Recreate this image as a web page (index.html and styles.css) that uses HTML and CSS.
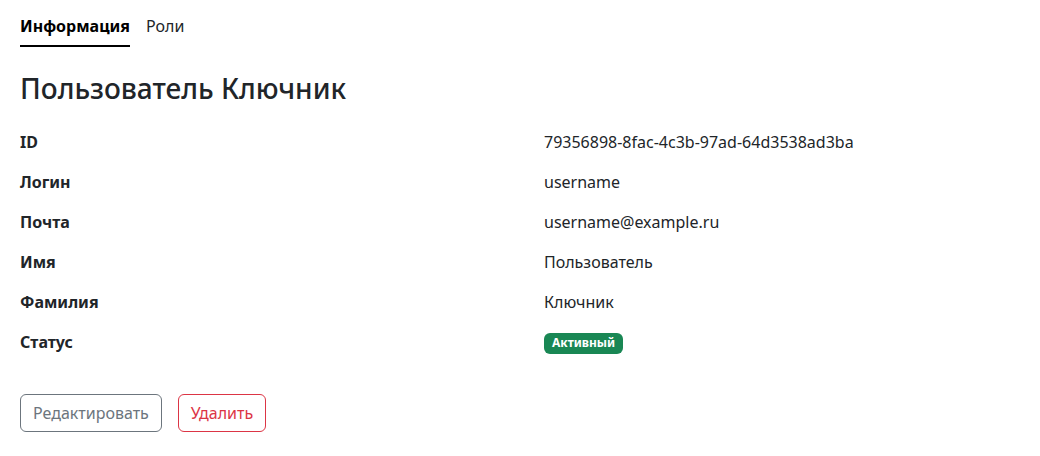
FILE: index.html
```html
<!DOCTYPE html>
<html lang="ru">
<head>
  <meta charset="UTF-8" />
  <meta name="viewport" content="width=device-width, initial-scale=1" />
  <title>Пользователь</title>
  <link rel="stylesheet" href="styles.css">
</head>
<body>
  <nav class="tabs">
    <a class="tab active" href="#">Информация</a>
    <a class="tab" href="#">Роли</a>
  </nav>

  <h1 class="title">Пользователь Ключник</h1>

  <dl class="info">
    <dt>ID</dt>
    <dd>79356898-8fac-4c3b-97ad-64d3538ad3ba</dd>
    <dt>Логин</dt>
    <dd>username</dd>
    <dt>Почта</dt>
    <dd>username@example.ru</dd>
    <dt>Имя</dt>
    <dd>Пользователь</dd>
    <dt>Фамилия</dt>
    <dd>Ключник</dd>
    <dt>Статус</dt>
    <dd><span class="badge">Активный</span></dd>
  </dl>

  <div class="actions">
    <button class="btn btn-secondary">Редактировать</button>
    <button class="btn btn-danger">Удалить</button>
  </div>
</body>
</html>
```

FILE: styles.css
```css
body {
  font-family: 'Noto Sans', 'Open Sans', sans-serif;
  font-size: 16px;
  line-height: 24px;
  color: #212529;
  background: #fff;
  margin: 0;
  padding: 0 20px;
}

.tabs {
  display: flex;
  gap: 16px;
  padding-top: 14px;
}

.tab {
  color: #212529;
  text-decoration: none;
  padding-bottom: 7px;
  border-bottom: 2px solid transparent;
}

.tab.active {
  font-weight: bold;
  color: #000;
  border-bottom-color: #000;
}

.title {
  font-size: 28px;
  font-weight: 500;
  line-height: 36px;
  margin: 23px 0 16px;
}

.info {
  display: grid;
  grid-template-columns: 524px 1fr;
  margin: 0;
}

.info dt,
.info dd {
  margin: 0;
  padding: 8px 0;
}

.info dt {
  font-weight: bold;
}

.badge {
  display: inline-block;
  background: #198754;
  color: #fff;
  font-size: 12px;
  font-weight: bold;
  line-height: 14px;
  padding: 3px 8px 4px;
  border-radius: 6px;
  vertical-align: middle;
}

.actions {
  display: flex;
  gap: 16px;
  margin-top: 32px;
}

.btn {
  font-family: inherit;
  font-size: 16px;
  line-height: 24px;
  background: #fff;
  padding: 6px 12px;
  border-radius: 6px;
  border: 1px solid;
  cursor: pointer;
}

.btn-secondary {
  color: #6c757d;
  border-color: #6c757d;
}

.btn-danger {
  color: #dc3545;
  border-color: #dc3545;
}
```
